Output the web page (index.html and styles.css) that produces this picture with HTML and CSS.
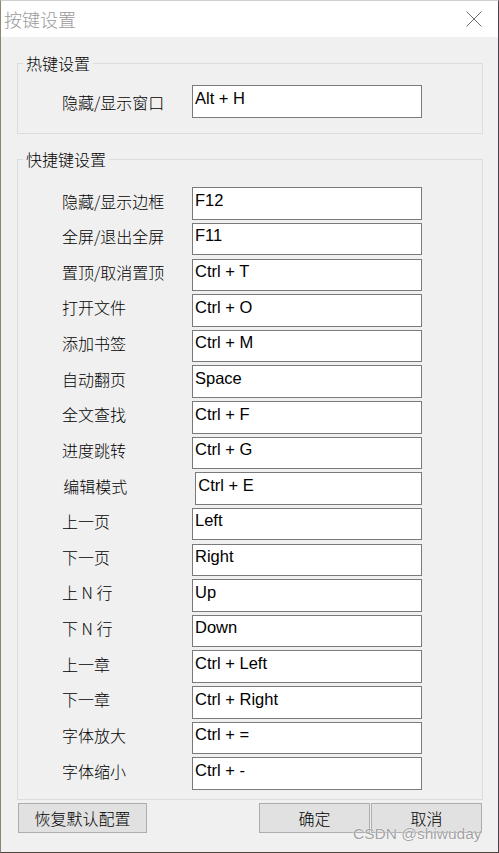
FILE: index.html
```html
<!DOCTYPE html>
<html lang="zh-CN">
<head>
<meta charset="utf-8">
<title>按键设置</title>
<link rel="stylesheet" href="styles.css">
</head>
<body>
<div class="window">
  <div class="titlebar">
    <span class="title">按键设置</span>
    <svg class="close" width="16" height="16" viewBox="0 0 16 16" aria-label="关闭">
      <path d="M0.5 0.5 L15.5 15.5 M15.5 0.5 L0.5 15.5" stroke="#6e6e6e" stroke-width="1" fill="none"/>
    </svg>
  </div>
  <div class="content">
    <fieldset class="group group-hot">
      <legend>热键设置</legend>
      <div class="rows">
        <div class="label">隐藏/显示窗口</div><div class="field">Alt + H</div>
      </div>
    </fieldset>
    <fieldset class="group group-quick">
      <legend>快捷键设置</legend>
      <div class="rows">
        <div class="label">隐藏/显示边框</div><div class="field">F12</div>
        <div class="label">全屏/退出全屏</div><div class="field">F11</div>
        <div class="label">置顶/取消置顶</div><div class="field">Ctrl + T</div>
        <div class="label">打开文件</div><div class="field">Ctrl + O</div>
        <div class="label">添加书签</div><div class="field">Ctrl + M</div>
        <div class="label">自动翻页</div><div class="field">Space</div>
        <div class="label">全文查找</div><div class="field">Ctrl + F</div>
        <div class="label">进度跳转</div><div class="field">Ctrl + G</div>
        <div class="label label-shift">编辑模式</div><div class="field field-shift">Ctrl + E</div>
        <div class="label">上一页</div><div class="field">Left</div>
        <div class="label">下一页</div><div class="field">Right</div>
        <div class="label">上 N 行</div><div class="field">Up</div>
        <div class="label">下 N 行</div><div class="field">Down</div>
        <div class="label">上一章</div><div class="field">Ctrl + Left</div>
        <div class="label">下一章</div><div class="field">Ctrl + Right</div>
        <div class="label">字体放大</div><div class="field">Ctrl + =</div>
        <div class="label">字体缩小</div><div class="field">Ctrl + -</div>
      </div>
    </fieldset>
    <div class="footer">
      <button class="btn btn-reset">恢复默认配置</button>
      <div class="actions">
        <button class="btn btn-action">确定</button>
        <button class="btn btn-action">取消</button>
      </div>
    </div>
  </div>
  <div class="watermark">CSDN @shiwuday</div>
</div>
</body>
</html>
```
FILE: styles.css
```css
html, body {
  margin: 0;
  padding: 0;
}
body {
  width: 499px;
  height: 853px;
  overflow: hidden;
  background: #f0f0f0;
  font-family: "Noto Sans CJK SC", "Noto Sans", sans-serif;
}
.window {
  position: relative;
  width: 499px;
  height: 853px;
  box-sizing: border-box;
  background: #f0f0f0;
  border-left: 1px solid #8f8474;
  border-right: 1px solid #4a404a;
  border-bottom: 1px solid #4d4338;
  border-top: 1px solid #cfcfcf;
}
.titlebar {
  height: 36px;
  background: #ffffff;
  display: flex;
  align-items: center;
  justify-content: space-between;
  padding: 0 16px 0 3px;
}
.title {
  font-size: 18px;
  line-height: 18px;
  font-weight: 300;
  color: #9b9b9b;
}
.close {
  display: block;
}
.content {
  padding: 0 15px 0 16px;
}
.group {
  margin: 0;
  padding: 0;
  min-width: 0;
  border: 1px solid #dcdcdc;
}
.group legend {
  margin-left: 5px;
  padding: 0 3px;
  font-size: 16px;
  line-height: 16px;
  font-weight: 300;
  color: #000;
}
.group-hot {
  margin-top: 18px;
}
.group-quick {
  margin-top: 17px;
}
.rows {
  display: grid;
  grid-template-columns: 130px 230px;
  padding-left: 44px;
}
.group-hot .rows {
  grid-auto-rows: 33px;
  padding-top: 14px;
  padding-bottom: 15px;
}
.group-quick .rows {
  grid-auto-rows: 35.625px;
  padding-top: 20.3px;
  padding-bottom: 5.8px;
}
.label {
  height: 32.5px;
  display: flex;
  align-items: center;
  padding-bottom: 6px;
  box-sizing: border-box;
  font-size: 16px;
  line-height: 16px;
  font-weight: 300;
  color: #000;
  white-space: nowrap;
}
.group-hot .label {
  height: 33px;
  padding-bottom: 0;
}
.field {
  height: 32.5px;
  box-sizing: border-box;
  border: 1px solid #7a7a7a;
  background: #ffffff;
  padding: 2.5px 2px 0;
  font-family: "Liberation Sans", Arial, sans-serif;
  font-size: 16.5px;
  line-height: 19px;
  color: #000;
  white-space: nowrap;
}
.group-hot .field {
  height: 33px;
}
.label-shift {
  padding-left: 1.3px;
}
.field-shift {
  margin-left: 3.3px;
}
.footer {
  display: flex;
  justify-content: space-between;
  margin-top: 3.6px;
  padding: 0 1px;
}
.actions {
  display: flex;
  gap: 1px;
}
.btn {
  height: 30px;
  margin: 0;
  padding: 0;
  border: 1px solid #adadad;
  background: #e1e1e1;
  font-family: "Noto Sans CJK SC", "Noto Sans", sans-serif;
  font-size: 16px;
  line-height: 16px;
  font-weight: 300;
  color: #000;
}
.btn-reset {
  width: 129px;
}
.btn-action {
  width: 111px;
}
.watermark {
  position: absolute;
  left: 352px;
  top: 823.5px;
  font-family: "Liberation Sans", Arial, sans-serif;
  font-size: 15.5px;
  color: rgba(130, 130, 130, 0.75);
  text-shadow: 0 0 1px #ffffff, 0 0 1px #ffffff;
  white-space: nowrap;
}
```
